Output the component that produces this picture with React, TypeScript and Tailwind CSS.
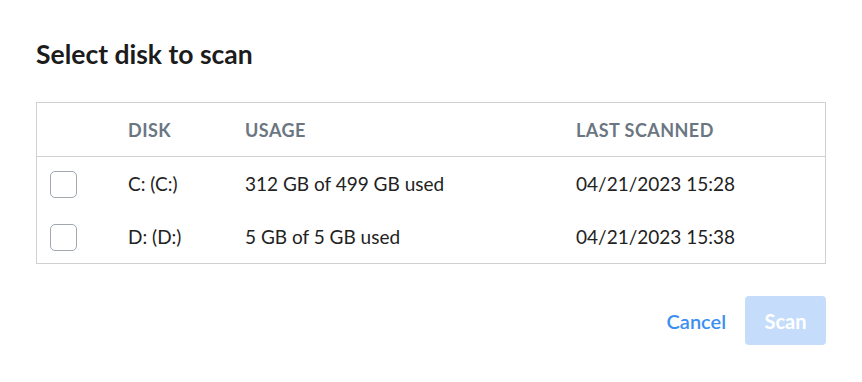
import React from "react";

const rows = [
  { disk: "C: (C:)", usage: "312 GB of 499 GB used", last: "04/21/2023 15:28" },
  { disk: "D: (D:)", usage: "5 GB of 5 GB used", last: "04/21/2023 15:38" },
];

export default function App() {
  return (
    <div className="w-[862px] h-[382px] bg-white flex flex-col px-[36px] pt-[36px] text-[#222222]" style={{ fontFamily: "Lato, 'Noto Sans', sans-serif" }}>
      <h1 className="text-[26.5px] leading-[36px] font-bold text-[#1c1c1c]">Select disk to scan</h1>
      <div className="mt-[30px] border border-[#cfd2d4] flex flex-col">
        <div className="grid grid-cols-[91px_117px_331px_1fr] h-[54px] items-center border-b border-[#cfd2d4] text-[18px] font-bold text-[#6b7682] tracking-[0.45px] pt-[1px]">
          <div />
          <div>DISK</div>
          <div>USAGE</div>
          <div>LAST SCANNED</div>
        </div>
        {rows.map((r) => (
          <div key={r.disk} className="grid grid-cols-[91px_117px_331px_1fr] h-[53px] items-center text-[19px] text-[#222222] pt-[1px]">
            <div className="pl-[13px]">
              <div className="w-[27px] h-[27px] rounded-[5px] border-[1.5px] border-[#a2a8b0] bg-white" />
            </div>
            <div>{r.disk}</div>
            <div>{r.usage}</div>
            <div>{r.last}</div>
          </div>
        ))}
      </div>
      <div className="mt-[32px] flex justify-end items-center gap-[19px]">
        <button className="text-[20px] font-semibold text-[#3b8ff0]">Cancel</button>
        <button className="w-[81px] h-[49px] rounded-[4px] bg-[#c5ddfa] text-white text-[20px] font-bold">Scan</button>
      </div>
    </div>
  );
}
